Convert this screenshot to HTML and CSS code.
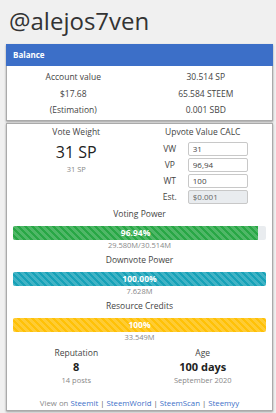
FILE: index.html
```html
<!DOCTYPE html>
<html>
<head>
<meta charset="utf-8">
<link rel="stylesheet" href="styles.css">
</head>
<body>
<h1 class="title">@alejos7ven</h1>

<div class="card">
  <div class="card-head">Balance</div>
  <div class="balance">
    <div>Account value</div><div>30.514 SP</div>
    <div>$17.68</div><div>65.584 STEEM</div>
    <div>(Estimation)</div><div>0.001 SBD</div>
  </div>
</div>

<div class="card card-main">
  <div class="top">
    <div class="col">
      <div class="label">Vote Weight</div>
      <div class="big">31 SP</div>
      <div class="sub">31 SP</div>
    </div>
    <div class="col">
      <div class="label">Upvote Value CALC</div>
      <div class="calc">
        <div class="calc-row"><span class="calc-l">VW</span><input class="inp" value="31"></div>
        <div class="calc-row"><span class="calc-l">VP</span><input class="inp" value="96,94"></div>
        <div class="calc-row"><span class="calc-l">WT</span><input class="inp" value="100"></div>
        <div class="calc-row"><span class="calc-l">Est.</span><input class="inp inp-ro" value="$0.001" readonly></div>
      </div>
    </div>
  </div>

  <div class="stat">
    <div class="label">Voting Power</div>
    <div class="track"><div class="fill green" style="width:96.94%">96.94%</div></div>
    <div class="sub">29.580M/30.514M</div>
  </div>
  <div class="stat">
    <div class="label">Downvote Power</div>
    <div class="track"><div class="fill teal" style="width:100%">100.00%</div></div>
    <div class="sub">7.628M</div>
  </div>
  <div class="stat">
    <div class="label">Resource Credits</div>
    <div class="track"><div class="fill yellow" style="width:100%">100%</div></div>
    <div class="sub">33.549M</div>
  </div>

  <div class="bottom">
    <div class="col">
      <div class="label">Reputation</div>
      <div class="val">8</div>
      <div class="sub2">14 posts</div>
    </div>
    <div class="col">
      <div class="label">Age</div>
      <div class="val">100 days</div>
      <div class="sub2">September 2020</div>
    </div>
  </div>

  <div class="footer">View on <a>Steemit</a> <span class="pipe">|</span> <a>SteemWorld</a> <span class="pipe">|</span> <a>SteemScan</a> <span class="pipe">|</span> <a>Steemyy</a></div>
</div>
</body>
</html>
```

FILE: styles.css
```css
html, body {
  margin: 0;
  padding: 0;
  background: #f0f0f0;
  font-family: "Open Sans", "DejaVu Sans", sans-serif;
  color: #444;
}
.title {
  margin: 0;
  padding: 6px 0 0 9px;
  height: 44px;
  box-sizing: border-box;
  font-weight: 400;
  font-size: 24px;
  line-height: 30px;
  color: #333;
  letter-spacing: 0;
}
.card {
  margin: 0 3px 2px 6px;
  background: #fff;
  border: 1px solid #aaa;
  box-shadow: 0 1px 2px rgba(0,0,0,.35);
}
.card-head {
  background: #3c6fc8;
  color: #fff;
  font-weight: 700;
  font-size: 8px;
  height: 22px;
  line-height: 22px;
  padding-left: 7px;
  margin: -1px -1px 0 -1px;
}
.balance {
  display: grid;
  grid-template-columns: 1fr 1fr;
  padding: 3px 0 1px;
  font-size: 8.5px;
  line-height: 16.5px;
  text-align: center;
  color: #444;
}
.card-main {
  padding: 1px 6px 1px;
}
.top, .bottom {
  display: grid;
  grid-template-columns: 1fr 1fr;
  text-align: center;
}
.label {
  font-size: 8.5px;
  line-height: 14px;
  color: #444;
}
.big {
  margin-top: 3px;
  font-size: 16px;
  line-height: 20px;
  color: #222;
}
.sub {
  font-size: 7.5px;
  line-height: 10px;
  color: #888;
}
.top .sub { margin-top: 2px; }
.calc {
  margin-top: 3px;
  display: flex;
  flex-direction: column;
  gap: 2px;
  align-items: center;
}
.calc-row {
  display: flex;
  align-items: center;
  gap: 6px;
  height: 14px;
}
.calc-l {
  width: 24px;
  text-align: center;
  font-size: 8.5px;
  color: #444;
}
.inp {
  width: 60px;
  height: 14px;
  box-sizing: border-box;
  border: 1px solid #c8c8c8;
  border-radius: 2px;
  padding: 0 4px;
  font-family: inherit;
  font-size: 8px;
  color: #444;
  background: #fff;
  outline: none;
}
.inp-ro {
  background: #e9ecef;
  color: #666;
}
.stat {
  margin-top: 3px;
  text-align: center;
}
.stat .label { margin-bottom: 5px; }
.track {
  height: 14px;
  background: #e9ecef;
  border-radius: 2px;
  overflow: hidden;
}
.fill {
  height: 100%;
  color: #fff;
  font-weight: 700;
  font-size: 8.5px;
  line-height: 14px;
  text-align: center;
  background-image: linear-gradient(45deg, rgba(255,255,255,.18) 25%, transparent 25%, transparent 50%, rgba(255,255,255,.18) 50%, rgba(255,255,255,.18) 75%, transparent 75%, transparent);
  background-size: 7px 7px;
}
.green { background-color: #28a745; }
.teal { background-color: #17a2b8; }
.yellow { background-color: #ffc107; }
.bottom { margin-top: 4px; }
.val {
  font-size: 11px;
  font-weight: 700;
  line-height: 14px;
  color: #222;
}
.sub2 {
  font-size: 7.5px;
  line-height: 13px;
  color: #888;
}
.footer {
  margin-top: 10px;
  text-align: center;
  font-size: 7.8px;
  line-height: 12px;
  color: #888;
}
.footer a { color: #3c6fc8; }
.pipe { color: #555; }
```
